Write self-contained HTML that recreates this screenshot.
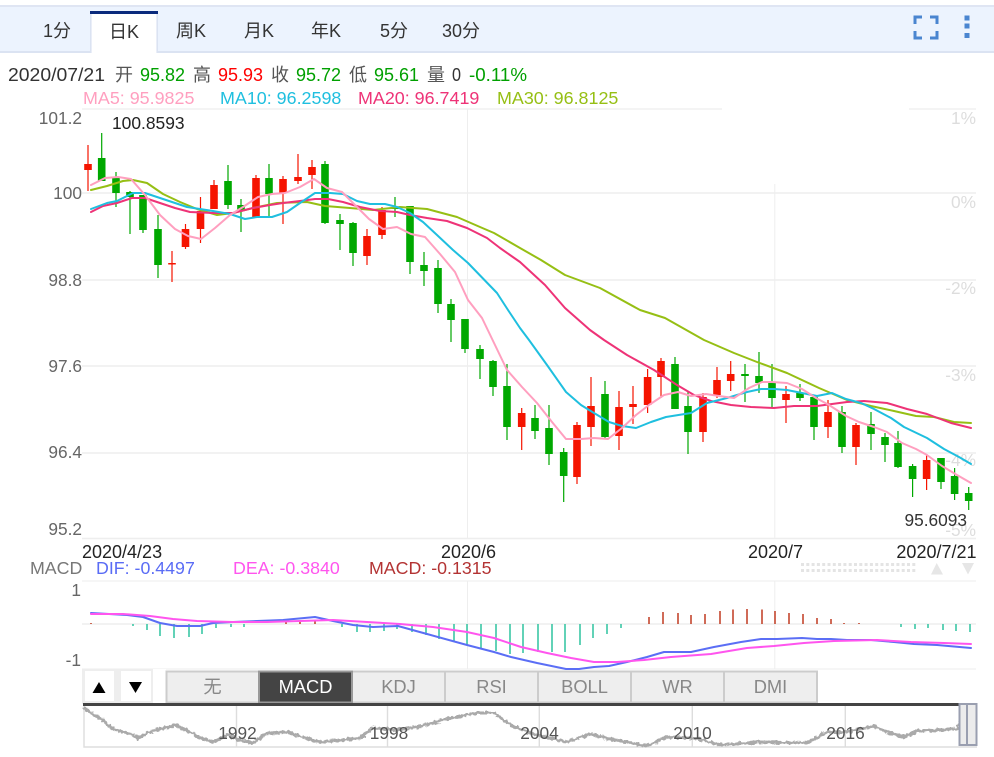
<!DOCTYPE html>
<html><head><meta charset="utf-8"><style>
html,body{margin:0;padding:0;background:#fff;width:994px;height:757px;overflow:hidden}
svg{display:block}
text{font-family:"Liberation Sans","Noto Sans CJK SC",sans-serif}
.c{font-family:"Liberation Sans","Noto Sans CJK SC",sans-serif;font-size:18px;fill:#333;text-anchor:middle}
.y{font-size:17.3px;fill:#666;text-anchor:end}
.p{font-size:17.3px;fill:#ddd;text-anchor:end}
.d{font-size:18px;fill:#222}
.i{font-size:18px}
.b{font-size:18.3px;fill:#888;text-anchor:middle}
.n{font-size:17.3px;fill:#555;text-anchor:middle}
.l{fill:none;stroke-width:2;stroke-linejoin:round;stroke-linecap:round}
</style></head><body>
<svg width="994" height="757" viewBox="0 0 994 757" xmlns="http://www.w3.org/2000/svg">
<defs>
<filter id="nz" x="-2%" y="-30%" width="104%" height="160%"><feTurbulence type="fractalNoise" baseFrequency="0.3" numOctaves="2" seed="4"/><feDisplacementMap in="SourceGraphic" scale="4.5" xChannelSelector="R" yChannelSelector="G"/></filter>
</defs>
<!-- top bar -->
<rect x="0" y="5" width="994" height="48" fill="#ecf3fe"/>
<rect x="0" y="5" width="994" height="2" fill="#dfe5f3"/>
<rect x="0" y="51" width="994" height="2" fill="#dbe3f2"/>
<rect x="90" y="11" width="68" height="42" fill="#fff"/>
<rect x="90" y="14" width="1.6" height="39" fill="#dbe3f2"/>
<rect x="156.4" y="14" width="1.6" height="39" fill="#dbe3f2"/>
<rect x="90" y="11" width="68" height="3" fill="#0a2a7c"/>
<text class="c" x="57" y="37">1分</text>
<text class="c" x="124" y="38">日K</text>
<text class="c" x="191" y="37">周K</text>
<text class="c" x="259" y="37">月K</text>
<text class="c" x="326" y="37">年K</text>
<text class="c" x="394" y="37">5分</text>
<text class="c" x="461" y="37">30分</text>
<path d="M922 17H915V24M930 17H937V24M915 31V38H922M937 31V38H930" fill="none" stroke="#4a85d0" stroke-width="3"/>
<path d="M964.5 15.5h5v5h-5zM964.5 23.5h5v5h-5zM964.5 33h5v5h-5z" fill="#4a85d0"/>
<!-- info row -->
<g class="i">
<text x="8" y="81" fill="#333" textLength="97" lengthAdjust="spacingAndGlyphs">2020/07/21</text>
<text x="115" y="81" fill="#555">开</text>
<text x="140" y="81" fill="#00a000" textLength="45" lengthAdjust="spacingAndGlyphs">95.82</text>
<text x="193" y="81" fill="#555">高</text>
<text x="218" y="81" fill="#f00" textLength="45" lengthAdjust="spacingAndGlyphs">95.93</text>
<text x="271" y="81" fill="#555">收</text>
<text x="296" y="81" fill="#00a000" textLength="45" lengthAdjust="spacingAndGlyphs">95.72</text>
<text x="349" y="81" fill="#555">低</text>
<text x="374" y="81" fill="#00a000" textLength="45" lengthAdjust="spacingAndGlyphs">95.61</text>
<text x="427" y="81" fill="#555">量</text>
<text x="452" y="81" fill="#333" textLength="9" lengthAdjust="spacingAndGlyphs">0</text>
<text x="469" y="81" fill="#00a000" textLength="58" lengthAdjust="spacingAndGlyphs">-0.11%</text>
</g>
<g font-size="17.9">
<text x="83" y="104" fill="#ff9fbf">MA5: 95.9825</text>
<text x="220" y="104" fill="#1fbfdf">MA10: 96.2598</text>
<text x="358" y="104" fill="#ee3377">MA20: 96.7419</text>
<text x="497" y="104" fill="#96bf14">MA30: 96.8125</text>
</g>
<!-- grid -->
<g stroke="#eee" fill="none">
<path d="M82 109H722M909 109H976" stroke-width="1.2"/>
<path d="M82 193H976M82 280H976M82 366H976M82 453H976M82 538.5H976" stroke-width="1.4"/>
<path d="M467.5 109V538M774.8 184V538M467.5 581V669M774.8 581V669" stroke-width="1"/>
<path d="M82 581H976M82 669H976" stroke-width="1"/>
<path d="M82 624H976" stroke-width="1.6"/>
</g>
<text class="y" x="82" y="124">101.2</text>
<text class="y" x="82" y="199">100</text>
<text class="y" x="82" y="286">98.8</text>
<text class="y" x="82" y="372">97.6</text>
<text class="y" x="82" y="458">96.4</text>
<text class="y" x="82" y="535">95.2</text>
<text class="p" x="976" y="124">1%</text>
<text class="p" x="976" y="208">0%</text>
<text class="p" x="976" y="294">-2%</text>
<text class="p" x="976" y="381">-3%</text>
<text class="p" x="976" y="466">-4%</text>
<text class="p" x="976" y="536">-5%</text>
<!-- green candles -->
<path fill="none" stroke="#00a800" stroke-width="1.2" d="M101.7 133V181M116 172V207M130 191V234M143 195V233M158 215V278M228 165V209M241 199V232M269 164V217M325 161V224M340 214V250M353 222V266M395 197V217M410 206V274M424 252V286M438 260V313M451 299V342M465 319V353M480 345V379M493 360V396M507 364V440M535 405V439M549 405V465M563.7 448V502M605 381V438M675 357V409M688 392V454M745 364V402M759 352V393M772 364V407M800 384V401M814 395V440M842 406V453M871 412V450M885 433V462M898 431V468M912.6 464V497M941 458V489M954.6 468V500M968.7 487V510"/>
<path fill="none" stroke="#00a800" stroke-width="7.6" d="M101.7 158V181M116 178V193M130 192V197M143 195V230M158 229V265M228 181V205M241 205V211M269 178V194M325 164V223M340 220V224M353 223V253M395 207V209M410 206V262M424 265V271M438 268V304M451 304V320M465 319V349M480 349V359M493 361V387M507 386V427M535 418V431M549 428V454M563.7 452V476M605 394V437M675 364V409M688 406V432M745 374V376M759 376V383M772 383V398M800 393V398M814 397V427M842 412V447M871 424V434M885 437V445M898 443V467M912.6 466V479M941 458V482M954.6 476V494M968.7 493V501"/>
<!-- red candles -->
<path fill="none" stroke="#f51400" stroke-width="1.2" d="M88 145V191M172 251V282M185.5 224V249M200.5 197V243M214 180V209M256 175V218M283 176V224M298 154V184M312 160V189M367 229V265M382 207V239M521.7 408V450M577 422V484M591 377V446M619 391V450M633 386V424M647.6 369V413M661 358V398M703 393V442M717 367V398M730.7 361V391M786 386V423M828 400V438M856 423V465M926.6 454V490"/>
<path fill="none" stroke="#f51400" stroke-width="7.6" d="M88 164V170M172 263V264.5M185.5 229V247M200.5 211V229M214 185V209M256 178V218M283 179V193M298 177V181M312 167V175M367 236V256M382 210V235M521.7 413V427M577 425V477M591 406V427M619 407V436M633 404V407M647.6 377V405M661 361V377M703 397V432M717 380V395M730.7 374V381M786 394V400M828 412V427M856 425V447M926.6 460V479"/>
<!-- MA lines -->
<polyline class="l" stroke="#96bf14" points="91,190 107,186 123,181 133,180 147,183 163,194 180,202 197,209 217,215 233,213 253,208 277,203 307,202 325,206 350,208 373,210 400,207 427,209 457,217 480,227 494,233 520,248 541,260 565,275 600,288 640,310 665,318 704,340 734,353 757,362 787,373 819,388 847,400 871,406 894,411 916,416 934,417 954,422 971,423"/>
<polyline class="l" stroke="#ee3377" points="91,212 103,206 117,203 132,198 145,198 160,203 175,208 190,212 213,213 233,213 253,208 270,205 283,203 300,201 315,199 328,199 343,202 360,207 380,211 397,212 410,215 427,218 447,221 467,228 487,238 500,248 520,262 545,285 565,308 590,330 604,340 627,355 654,370 677,385 694,395 711,401 731,405 751,407 774,408 794,406 817,406 847,402 864,401 887,403 907,409 927,414 951,423 971,428"/>
<polyline class="l" stroke="#1fbfdf" points="91,209 107,203 117,201 133,193 145,193 160,198 187,207 200,209 213,211 230,214 245,219 257,217 272,217 287,212 300,203 315,193 330,193 343,194 357,201 370,204 385,204 397,207 410,213 423,222 437,235 453,250 468,263 497,293 508,310 520,328 529,340 547,365 566,392 581,405 594,413 609,422 622,426 636,428 651,422 666,417 691,413 707,403 727,398 747,392 761,389 774,389 787,390 802,393 817,396 832,393 846,399 861,403 874,409 891,418 904,427 927,438 944,449 959,457 971,464"/>
<polyline class="l" stroke="#ff9fbf" points="91,185 105,178 118,177 131,179 145,195 160,215 175,229 188,236 201,239 215,228 230,215 243,207 258,197 272,194 285,193 300,187 314,179 327,188 342,192 355,205 369,219 383,229 397,227 411,234 425,237 440,254 455,272 468,300 482,318 495,345 507,370 522,387 537,403 552,422 566,439 581,439 594,438 608,439 622,428 636,415 649,405 664,395 678,392 691,396 706,394 719,396 734,398 749,388 762,382 772,382 787,383 802,389 816,398 829,405 846,416 859,422 874,427 887,432 902,443 916,449 927,455 942,466 957,475 971,483"/>
<text x="112" y="129" font-size="17.4" fill="#222">100.8593</text>
<text x="904.5" y="526" font-size="17.3" fill="#333">95.6093</text>
<!-- dates -->
<text class="d" x="82" y="558">2020/4/23</text>
<text class="d" x="441" y="558">2020/6</text>
<text class="d" x="748" y="558">2020/7</text>
<text class="d" x="976.5" y="558" text-anchor="end">2020/7/21</text>
<g font-size="17.8">
<text x="30" y="574" fill="#777">MACD</text>
<text x="96" y="574" fill="#5a6cf5">DIF: -0.4497</text>
<text x="233" y="574" fill="#ff55ee">DEA: -0.3840</text>
<text x="369" y="574" fill="#b33333">MACD: -0.1315</text>
</g>
<!-- grip -->
<path d="M801 564.5H917M801 570.5H917" fill="none" stroke="#e4e4e4" stroke-width="3" stroke-dasharray="3 2.3"/>
<path d="M936.7 563L943 574.5H931z" fill="#e6e6e6"/>
<path d="M962 563H974L968 574.5z" fill="#e6e6e6"/>
<!-- MACD -->
<text class="y" x="81" y="596" fill="#666">1</text>
<text class="y" x="81" y="666">-1</text>
<path fill="none" stroke="#2fc39f" stroke-width="1.5" d="M133 624V626M147 624V630M160 624V636M174 624V638M189 624V637M202 624V634M216 624V628M231 624V627M244 624V627M342 624V627M357 624V632M370 624V632M384 624V631M397 624V629M412 624V632M426 624V635M439 624V639M454 624V642M467 624V645M481 624V649M496 624V651M510 624V654M523 624V653M538 624V652M552 624V652M565 624V652M580 624V645M593 624V638M607 624V634M621 624V628M901 624V627M915 624V629M928 624V628M943 624V630M956 624V631M970 624V632"/>
<path fill="none" stroke="#c03a20" stroke-width="1.5" d="M91 623V624M286 622V624M300 621V624M315 620V624M649 617V624M663 612V624M678 613V624M691 615V624M705 614V624M720 611V624M733 609.5V624M747 609V624M762 609.5V624M775 611V624M789 613V624M803 614V624M817 618V624M831 619V624M844 623V624M859 623V624"/>
<polyline class="l" stroke="#5b6ef5" points="91,613 127,615 143,617 160,623 177,626 200,626 213,623 233,622 257,621 283,620 315,617 333,621 353,625 373,627 398,626 427,634 467,645 494,652 511,657 537,663 566,669 579,669 594,667 609,666 627,662 647,657 664,652 691,652 714,647 741,642 761,639 777,639 802,638 817,639 831,639 847,640 871,640 894,642 914,644 937,645 971,648"/>
<polyline class="l" stroke="#ff55ee" points="91,614 123,614 150,616 173,619 197,621 233,622 267,622 300,621 333,620 367,622 400,624 433,627 467,632 494,638 521,647 547,653 571,658 594,662 617,662 644,660 671,657 711,654 747,648 774,646 804,643 834,641 877,640 911,642 944,643 971,644"/>
<!-- buttons -->
<rect x="82" y="669" width="84" height="35" fill="#eee"/>
<rect x="85" y="671" width="29" height="30" fill="#fff"/>
<rect x="121" y="671" width="30" height="30" fill="#fff"/>
<rect x="153" y="669" width="13" height="35" fill="#fff"/>
<path d="M99 682L105.5 693H92.5z" fill="#000"/>
<path d="M129 682H142L135.5 693z" fill="#000"/>
<g fill="#eee" stroke="#ccc" stroke-width="2">
<rect x="166.5" y="671.5" width="92.5" height="31"/>
<rect x="352" y="671.5" width="93" height="31"/>
<rect x="445" y="671.5" width="93" height="31"/>
<rect x="538" y="671.5" width="93" height="31"/>
<rect x="631" y="671.5" width="93" height="31"/>
<rect x="724" y="671.5" width="93" height="31"/>
</g>
<rect x="259" y="671.5" width="93" height="31" fill="#444" stroke="#999" stroke-width="2"/>
<text class="b" x="212.5" y="693">无</text>
<text class="b" x="305.5" y="693" style="fill:#fff">MACD</text>
<text class="b" x="398.5" y="693">KDJ</text>
<text class="b" x="491.5" y="693">RSI</text>
<text class="b" x="584.5" y="693">BOLL</text>
<text class="b" x="677.5" y="693">WR</text>
<text class="b" x="770.5" y="693">DMI</text>
<!-- navigator -->
<path d="M84 705V747H977M236.5 706V747M387.5 706V747M539.3 706V747M692.3 706V747M845.3 706V747" fill="none" stroke="#ddd" stroke-width="1.4"/>
<g filter="url(#nz)">
<polyline fill="none" stroke="#aaa" stroke-width="3" stroke-linejoin="round" points="83,707 92,714 100,718 108,725 115,730 128,733 138,738 147,733 157,730 165,728 175,725 190,732 200,738 213,742 227,735 240,740 253,743 267,733 287,732 305,738 320,742 340,740 360,738 373,728 395,730 417,727 443,720 460,716 477,713 494,713 511,725 527,732 545,737 566,742 591,734 610,739 627,742 647,746 667,737 694,738 710,742 721,745 761,742 807,743 827,732 847,732 874,726 890,733 904,737 917,731 940,730 957,729 960,720"/>
</g>
<rect x="83" y="703" width="876" height="3" fill="#444"/>
<text class="n" x="237.5" y="739">1992</text>
<text class="n" x="389" y="739">1998</text>
<text class="n" x="539.5" y="739">2004</text>
<text class="n" x="692.5" y="739">2010</text>
<text class="n" x="845.5" y="739">2016</text>
<rect x="959.5" y="704" width="17" height="41" fill="#ececec" stroke="#9a9fb0" stroke-width="2"/>
<rect x="966" y="704" width="2" height="41" fill="#9a9fb0"/>
</svg>
</body></html>
